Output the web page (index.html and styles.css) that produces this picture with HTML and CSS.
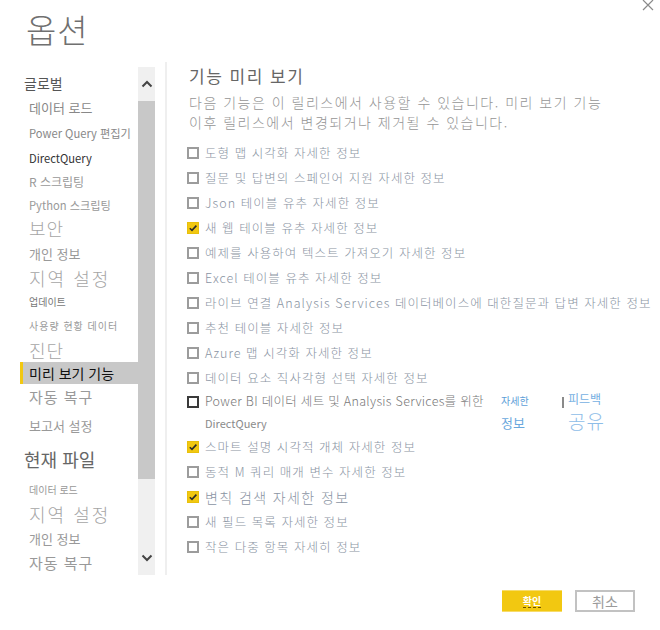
FILE: index.html
```html
<!DOCTYPE html>
<html lang="ko">
<head>
<meta charset="utf-8">
<title>옵션</title>
<link rel="stylesheet" href="styles.css">
</head>
<body>
<div class="dialog">
  <button class="close" aria-label="닫기">
    <svg width="12" height="12" viewBox="0 0 12 12"><path d="M1 1 L11 11 M11 1 L1 11" stroke="#8a8a8a" stroke-width="1.2" fill="none"/></svg>
  </button>
  <header class="title">옵션</header>
  <div class="main">
    <div class="sidebar">
      <nav class="nav">
        <div class="nav-item grp h25">글로벌</div>
        <div class="nav-item s13 c88 h25">데이터 로드</div>
        <div class="nav-item s115 c88 h25">Power Query 편집기</div>
        <div class="nav-item s115 c33 h25">DirectQuery</div>
        <div class="nav-item s12 c99 h23">R 스크립팅</div>
        <div class="nav-item s115 c99 h23">Python 스크립팅</div>
        <div class="nav-item s18 light h24">보안</div>
        <div class="nav-item s13 c99 h26">개인 정보</div>
        <div class="nav-item s18 light wide h24">지역 설정</div>
        <div class="nav-item s10 c77 h23">업데이트</div>
        <div class="nav-item s10 c99 spaced h25">사용량 현황 데이터</div>
        <div class="nav-item s18 light h24">진단</div>
        <div class="nav-item selected h22">미리 보기 기능</div>
        <div class="nav-item s15 c99 h25">자동 복구</div>
        <div class="nav-item s13 c99 h33">보고서 설정</div>
        <div class="nav-item grp2 h34">현재 파일</div>
        <div class="nav-item s10 c99 h26">데이터 로드</div>
        <div class="nav-item s18 light wide h24">지역 설정</div>
        <div class="nav-item s13 c99 h24">개인 정보</div>
        <div class="nav-item s15 c99 h25">자동 복구</div>
      </nav>
      <div class="scrollbar">
        <div class="sb-btn">
          <svg width="12" height="8" viewBox="0 0 12 8"><path d="M1.5 6.5 L6 2 L10.5 6.5" stroke="#444" stroke-width="2" fill="none"/></svg>
        </div>
        <div class="sb-thumb"></div>
        <div class="sb-track"></div>
        <div class="sb-btn">
          <svg width="12" height="8" viewBox="0 0 12 8"><path d="M1.5 1.5 L6 6 L10.5 1.5" stroke="#444" stroke-width="2" fill="none"/></svg>
        </div>
      </div>
    </div>
    <div class="divider"></div>
    <section class="content">
      <h1 class="heading">기능 미리 보기</h1>
      <p class="desc">다음 기능은 이 릴리스에서 사용할 수 있습니다. 미리 보기 기능<br>이후 릴리스에서 변경되거나 제거될 수 있습니다.</p>
      <ul class="list">
        <li class="row"><span class="cb"></span>도형 맵 시각화 자세한 정보</li>
        <li class="row"><span class="cb"></span>질문 및 답변의 스페인어 지원 자세한 정보</li>
        <li class="row"><span class="cb"></span>Json 테이블 유추 자세한 정보</li>
        <li class="row"><span class="cb checked"><svg width="10" height="10" viewBox="0 0 10 10"><path d="M1.8 5.2 L4 7.4 L8.4 2.6" stroke="#2b2b2b" stroke-width="1.6" fill="none"/></svg></span>새 웹 테이블 유추 자세한 정보</li>
        <li class="row"><span class="cb"></span>예제를 사용하여 텍스트 가져오기 자세한 정보</li>
        <li class="row"><span class="cb"></span>Excel 테이블 유추 자세한 정보</li>
        <li class="row"><span class="cb"></span>라이브 연결 Analysis Services 데이터베이스에 대한질문과 답변 자세한 정보</li>
        <li class="row"><span class="cb"></span>추천 테이블 자세한 정보</li>
        <li class="row"><span class="cb"></span>Azure 맵 시각화 자세한 정보</li>
        <li class="row"><span class="cb"></span>데이터 요소 직사각형 선택 자세한 정보</li>
        <li class="row-pbi">
          <span class="cb dark"></span>
          <div class="pbi-text">
            <div class="pbi-line1">Power BI 데이터 세트 및 Analysis Services를 위한</div>
            <div class="pbi-line2">DirectQuery</div>
          </div>
          <div class="pbi-links">
            <a class="link-sm">자세한</a>
            <a class="link-md">정보</a>
          </div>
          <span class="sep"></span>
          <div class="feedback">
            <a class="fb-top">피드백</a>
            <a class="fb-big">공유</a>
          </div>
        </li>
        <li class="row"><span class="cb checked"><svg width="10" height="10" viewBox="0 0 10 10"><path d="M1.8 5.2 L4 7.4 L8.4 2.6" stroke="#2b2b2b" stroke-width="1.6" fill="none"/></svg></span>스마트 설명 시각적 개체 자세한 정보</li>
        <li class="row"><span class="cb"></span>동적 M 쿼리 매개 변수 자세한 정보</li>
        <li class="row big"><span class="cb checked"><svg width="10" height="10" viewBox="0 0 10 10"><path d="M1.8 5.2 L4 7.4 L8.4 2.6" stroke="#2b2b2b" stroke-width="1.6" fill="none"/></svg></span>변칙 검색 자세한 정보</li>
        <li class="row"><span class="cb"></span>새 필드 목록 자세한 정보</li>
        <li class="row"><span class="cb"></span>작은 다중 항목 자세히 정보</li>
      </ul>
    </section>
  </div>
  <footer class="footer">
    <button class="btn btn-ok"><span class="ok-label">확인</span></button>
    <button class="btn btn-cancel">취소</button>
  </footer>
</div>
</body>
</html>
```
FILE: styles.css
```css
* { box-sizing: border-box; }
html, body { margin: 0; padding: 0; background: #fff; }
body {
  width: 660px;
  height: 630px;
  overflow: hidden;
  font-family: "Noto Sans CJK KR", "Noto Sans", sans-serif;
}
.dialog { position: relative; width: 660px; height: 630px; }
.close {
  position: absolute; top: -1px; right: 5px;
  width: 14px; height: 12px; padding: 0; border: 0; background: none;
  display: flex; align-items: center; justify-content: center;
}
.title {
  height: 62px;
  padding: 9px 0 0 26px;
  font-size: 33px;
  line-height: 40px;
  font-weight: 300;
  color: #707070;
  letter-spacing: 1px;
}
.main { display: flex; height: 513px; }
.sidebar { display: flex; width: 155px; }
.nav { width: 138px; padding-top: 8px; }
.nav-item {
  display: flex; align-items: center;
  padding-left: 29px;
  white-space: nowrap;
  font-size: 12px;
  color: #999;
}
.h22 { height: 22px; } .h23 { height: 23px; } .h24 { height: 24px; }
.h25 { height: 25px; } .h26 { height: 26px; } .h33 { height: 33px; }
.h34 { height: 34px; }
.grp { padding-left: 24px; font-size: 14px; color: #555; }
.grp2 { padding-left: 24px; font-size: 18px; color: #666; }
.s10 { font-size: 10px; }
.s115 { font-size: 11.2px; }
.s12 { font-size: 12px; }
.s13 { font-size: 13px; }
.s15 { font-size: 15px; letter-spacing: 1px; }
.s18 { font-size: 18px; }
.c33 { color: #333; }
.c77 { color: #777; }
.c88 { color: #888; }
.c99 { color: #999; }
.light { color: #a5a5a5; letter-spacing: 1px; font-weight: 300; }
.wide { letter-spacing: 2px; }
.spaced { letter-spacing: 1px; }
.selected {
  margin-left: 20px;
  padding-left: 6px;
  border-left: 3px solid #f2c811;
  background: #c8c8c8;
  font-size: 14px;
  color: #111;
}
.scrollbar {
  width: 17px;
  height: 508px;
  margin-top: 5px;
  background: #f0f0f0;
  display: flex; flex-direction: column;
}
.sb-btn { height: 34px; display: flex; align-items: center; justify-content: center; }
.sb-thumb { height: 378px; background: #c8c8c8; }
.sb-track { flex: 1; }
.divider { width: 2px; margin-left: 10px; background: #efefef; }
.content { padding-left: 20px; padding-top: 2px; flex: 1; }
.heading {
  margin: 0 0 0 2px;
  font-size: 17px; line-height: 24px; font-weight: 400;
  color: #666;
  letter-spacing: 1.5px;
}
.desc {
  margin: 4px 0 0 2px;
  font-size: 14px; line-height: 20px;
  color: #959595;
  letter-spacing: 1.5px;
  font-weight: 300;
  white-space: nowrap;
}
.list { list-style: none; margin: 8px 0 0; padding: 0; }
.row {
  height: 25px;
  display: flex; align-items: center;
  font-size: 12.5px;
  color: #8a94a3;
  letter-spacing: 1.05px;
  font-weight: 300;
  white-space: nowrap;
}
.row.big { font-size: 14px; letter-spacing: 1.4px; }
.cb {
  flex: none;
  width: 12px; height: 12px;
  margin-right: 6px;
  border: 2px solid #9c9c9c;
  background: #fff;
  display: flex; align-items: center; justify-content: center;
}
.cb.checked { background: #f2c811; border: 1px solid #e8c00c; }
.cb.dark { border-color: #3a3a3a; }
.row-pbi { display: flex; height: 44px; }
.row-pbi .cb { margin-top: 6px; }
.pbi-text { width: 296px; white-space: nowrap; }
.pbi-line1 { height: 22px; line-height: 22px; font-size: 12.5px; color: #777; letter-spacing: 0.3px; font-weight: 300; }
.pbi-line2 { height: 22px; line-height: 22px; font-size: 11px; color: #8a8a8a; }
.pbi-links { width: 61px; display: flex; flex-direction: column; }
.link-sm { height: 22px; line-height: 22px; font-size: 10px; color: #5e9ed8; }
.link-md { height: 22px; line-height: 22px; font-size: 13px; color: #6aa8dd; }
.sep { width: 2px; height: 11px; margin-top: 7px; background: #8a8a8a; }
.feedback { margin-left: 4px; display: flex; flex-direction: column; }
.fb-top { height: 18px; line-height: 18px; font-size: 12px; color: #76b0e2; }
.fb-big { height: 26px; line-height: 26px; font-size: 19px; color: #8ebde8; letter-spacing: 1px; font-weight: 300; }
.footer {
  display: flex; justify-content: flex-end; gap: 13px;
  margin-top: 15px; padding-right: 25px;
}
.btn {
  width: 60px; height: 22px; padding: 0;
  font-family: "Noto Sans CJK KR", sans-serif;
  display: flex; align-items: center; justify-content: center;
}
.btn-ok { background: #f2c811; border: 0; border-top: 1px solid #f7dc6a; border-bottom: 1px solid #f7dc6a; }
.ok-label {
  font-size: 10px; font-weight: 700; color: #fff; line-height: 11px;
  border-bottom: 1px dashed #6b5200;
  padding-bottom: 1px;
}
.btn-cancel {
  background: #fff; border: 2px solid #c2c2c2;
  font-size: 14px; color: #9a9a9a;
}
```
